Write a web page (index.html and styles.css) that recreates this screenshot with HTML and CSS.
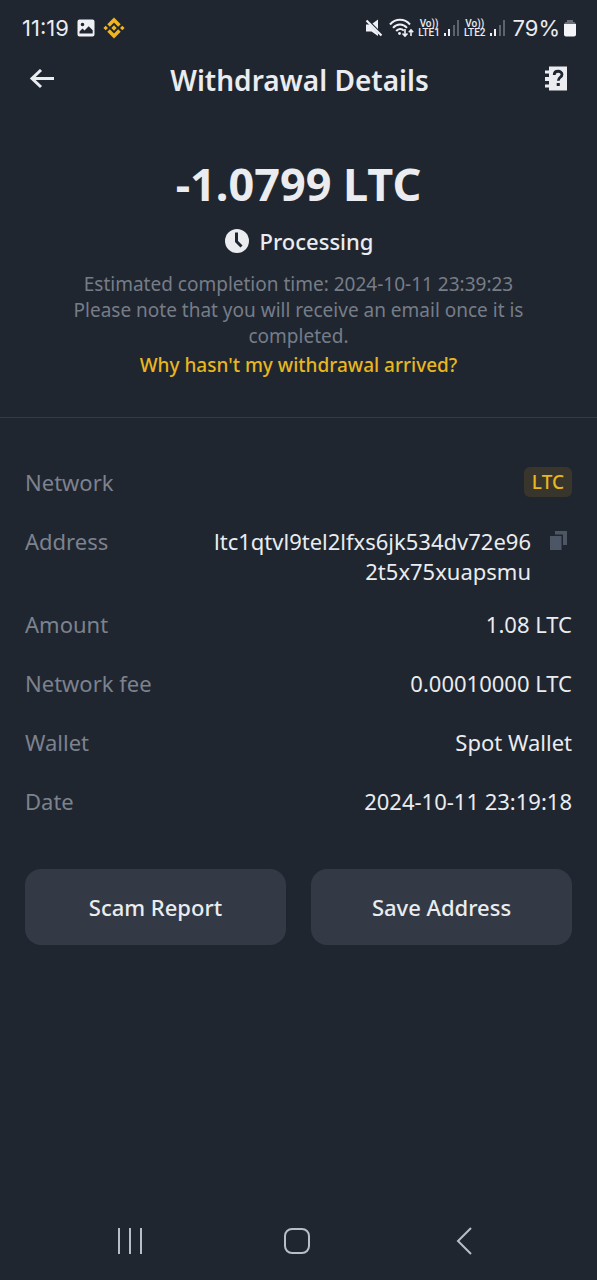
FILE: index.html
```html
<!DOCTYPE html>
<html lang="en">
<head>
<meta charset="utf-8">
<meta name="viewport" content="width=device-width, initial-scale=1">
<title>Withdrawal Details</title>
<link rel="stylesheet" href="styles.css">
</head>
<body>
<div class="screen">
  <div class="status">
    <div class="status-left">
      <span class="clock">11:19</span>
      <svg width="18" height="18" viewBox="0 0 18 18"><path fill="#eef0f5" fill-rule="evenodd" d="M2.500 .5h13a2 2 0 0 1 2 2v13a2 2 0 0 1-2 2h-13a2 2 0 0 1-2-2v-13a2 2 0 0 1 2-2zM2.500 14.500h13.200v-3.300l-4-4-4.200 4.300-2-2-3 3zM5.500 3.700a1.800 1.800 0 1 0 0 3.600 1.800 1.800 0 0 0 0-3.600z"/></svg>
      <svg width="22" height="22" viewBox="0 0 22 22" fill="#efb622"><path d="M11 .5l6.700 6.700-2.500 2.500L11 5.500 6.800 9.700 4.300 7.200zM11 21.500l6.700-6.700-2.500-2.500L11 16.500l-4.200-4.200-2.500 2.500zM2.700 8.700L5 11l-2.300 2.300L.4 11zM19.300 8.700l2.300 2.300-2.300 2.300L17 11zM11 8.300l2.700 2.700-2.700 2.700L8.300 11z"/></svg>
    </div>
    <div class="status-right">
      <svg width="18" height="18" viewBox="0 0 18 18"><path fill="#eef0f5" d="M1 5.500h3.500l8.500 9V17l-6.500-4.500H1zM7.500 4.500L13 .5v9.500z"/><path stroke="#eef0f5" stroke-width="2.200" d="M1.500 1.500l15 15"/></svg>
      <svg class="ico-wifi" width="25" height="20" viewBox="0 0 25 20" fill="none" stroke="#eef0f5" stroke-width="2"><path d="M1 6.500C6.500 .3 15.500.3 21 6.500M4 9.800c4-4.500 10-4.500 14 0M7.200 13c2.200-2.600 5.400-2.600 7.600-.4"/><circle cx="10.500" cy="15.500" r="1.400" fill="#eef0f5" stroke="none"/><path stroke-width="1.600" d="M16 11v7M13.500 15.500l2.500 2.500 2.500-2.500M22 18v-6M19.800 14.200L22 12l2.200 2.200"/></svg>
      <span class="volte"><span>Vo))</span><span>LTE1</span></span>
      <svg width="16" height="17" viewBox="0 0 16 17"><path fill="#eef0f5" d="M0 13h2v3H0zM4 9h2v7H4z"/><path fill="#5d636c" d="M9 5h2v11H9zM13 0h2v16h-2z"/></svg>
      <span class="volte"><span>Vo))</span><span>LTE2</span></span>
      <svg width="16" height="17" viewBox="0 0 16 17"><path fill="#eef0f5" d="M0 13h2v3H0zM4 9h2v7H4z"/><path fill="#5d636c" d="M9 5h2v11H9zM13 0h2v16h-2z"/></svg>
      <span class="percent">79%</span>
      <svg width="12" height="18" viewBox="0 0 12 18"><path fill="#6a6f77" d="M3 1h6v2h1.500L12 5H0l1.500-2H3z"/><path fill="#f3f4f7" d="M0 5h12v10.500a2 2 0 0 1-2 2H2a2 2 0 0 1-2-2z"/></svg>
    </div>
  </div>

  <header class="header">
    <button class="icon-btn" aria-label="Back"><svg width="26" height="22" viewBox="0 0 26 22" fill="none" stroke="#eaecef" stroke-width="3"><path d="M25 9.500H3M12 1L3 9.500l9 8.500"/></svg></button>
    <h1>Withdrawal Details</h1>
    <button class="icon-btn" aria-label="Help"><svg width="24" height="28" viewBox="0 0 24 28"><path fill="#eaecef" d="M5 .5h18v24H5v-3H1v-3h4v-3.500H1v-4h4V7.500H1v-3h4z"/><path fill="none" stroke="#20262f" stroke-width="2.800" d="M10.200 9c0-5 7.800-4.800 7.800-.6 0 3-3.700 2.700-3.700 6.300"/><path fill="#20262f" d="M12.700 17h3.100v3h-3.100z"/></svg></button>
  </header>

  <main>
    <section class="summary">
      <div class="amount">-1.0799 LTC</div>
      <div class="state"><svg width="26" height="26" viewBox="0 0 26 26"><circle cx="13" cy="13" r="12" fill="#eaecef"/><path fill="none" stroke="#20262f" stroke-width="3" d="M12.500 4.500v9l5 5"/></svg><span>Processing</span></div>
      <p class="note">Estimated completion time: 2024-10-11 23:39:23<br>Please note that you will receive an email once it is completed.</p>
      <a class="why" href="#">Why hasn't my withdrawal arrived?</a>
    </section>

    <dl class="details">
      <div class="row"><dt>Network</dt><dd><span class="tag">LTC</span></dd></div>
      <div class="row row-address"><dt>Address</dt><dd class="address"><span>ltc1qtvl9tel2lfxs6jk534dv72e96<br>2t5x75xuapsmu</span><button class="copy" aria-label="Copy address"><svg width="18" height="20" viewBox="0 0 18 20" fill="#4d5665"><path d="M1 5h11.500v14H1zM6 0h12v14h-4V3.500H6z"/></svg></button></dd></div>
      <div class="row"><dt>Amount</dt><dd>1.08 LTC</dd></div>
      <div class="row"><dt>Network fee</dt><dd>0.00010000 LTC</dd></div>
      <div class="row"><dt>Wallet</dt><dd>Spot Wallet</dd></div>
      <div class="row"><dt>Date</dt><dd>2024-10-11 23:19:18</dd></div>
    </dl>

    <div class="actions">
      <button class="action">Scam Report</button>
      <button class="action">Save Address</button>
    </div>
  </main>

  <nav class="nav">
    <button class="icon-btn" aria-label="Recent apps"><svg width="26" height="26" viewBox="0 0 26 26" stroke="#b9bdc5" stroke-width="2"><path d="M2 0v26M13 0v26M24 0v26"/></svg></button>
    <button class="icon-btn" aria-label="Home"><svg width="28" height="28" viewBox="0 0 28 28"><rect x="2" y="2" width="24" height="24" rx="7" fill="none" stroke="#b9bdc5" stroke-width="2"/></svg></button>
    <button class="icon-btn" aria-label="Back"><svg width="18" height="28" viewBox="0 0 18 28" fill="none" stroke="#b9bdc5" stroke-width="2"><path d="M16 1L3 14l13 13"/></svg></button>
  </nav>
</div>
</body>
</html>
```
FILE: styles.css
```css
* {
  box-sizing: border-box;
}

body {
  margin: 0;
  background: #20262f;
  color: #eaecef;
  font-family: "Noto Sans", "Open Sans", sans-serif;
  font-size: 22px;
  line-height: 30px;
}

button {
  margin: 0;
  padding: 0;
  border: 0;
  background: none;
  color: inherit;
  font: inherit;
  cursor: pointer;
}

svg {
  display: block;
  flex: none;
}

.screen {
  display: flex;
  flex-direction: column;
  min-height: 100vh;
}

.status {
  display: flex;
  align-items: center;
  justify-content: space-between;
  height: 54px;
  padding: 2px 21px 0 22px;
  font-family: Inter, sans-serif;
  font-size: 22px;
}

.status-left,
.status-right {
  display: flex;
  align-items: center;
}

.status-left {
  gap: 8px;
}

.status-right {
  gap: 4px;
}

.ico-wifi {
  margin-left: 2px;
}

.volte {
  display: flex;
  flex-direction: column;
  align-items: center;
  font-family: Roboto, sans-serif;
  font-size: 10px;
  font-weight: 500;
  line-height: 9px;
}

.percent {
  margin-left: 3px;
}

.header {
  display: flex;
  align-items: center;
  justify-content: space-between;
  height: 52px;
  padding: 0 29px;
}

.header h1 {
  margin: 0;
  font-size: 28px;
  font-weight: 600;
  line-height: 40px;
}

.icon-btn {
  display: flex;
  align-items: center;
  justify-content: center;
}

.summary {
  display: flex;
  flex-direction: column;
  align-items: center;
  padding: 50px 60px 39px;
  border-bottom: 1px solid #353b45;
  text-align: center;
}

.amount {
  font-size: 45px;
  font-weight: 700;
  line-height: 56px;
}

.state {
  display: flex;
  align-items: center;
  gap: 10px;
  margin-top: 13px;
  font-weight: 500;
  line-height: 32px;
}

.note {
  margin: 14px 0 3px;
  color: #767d89;
  font-size: 19px;
  line-height: 26px;
}

.why {
  color: #e8b620;
  font-size: 19px;
  font-weight: 500;
  line-height: 26px;
  text-decoration: none;
}

.details {
  margin: 0;
  padding: 34px 25px 0;
}

.row {
  display: flex;
  align-items: center;
  justify-content: space-between;
  min-height: 59px;
}

.row dt {
  color: #7c828e;
}

.row dd {
  margin: 0;
  text-align: right;
}

.row-address {
  align-items: flex-start;
  padding: 15px 0 8px;
}

.address {
  display: flex;
  align-items: flex-start;
  gap: 18px;
}

.row .address {
  margin-right: 5px;
}

.copy {
  padding-top: 5px;
}

.tag {
  display: block;
  padding: 0 8px;
  border-radius: 6px;
  background: #38352c;
  color: #e8b620;
  font-size: 19px;
  font-weight: 500;
}

.actions {
  display: grid;
  grid-template-columns: 1fr 1fr;
  gap: 25px;
  padding: 39px 25px;
}

.action {
  height: 76px;
  border-radius: 16px;
  background: #333a45;
  font-weight: 500;
}

.nav {
  display: grid;
  grid-template-columns: repeat(3, 1fr);
  height: 78px;
  margin-top: auto;
  padding: 0 50px 0 46px;
}
```
